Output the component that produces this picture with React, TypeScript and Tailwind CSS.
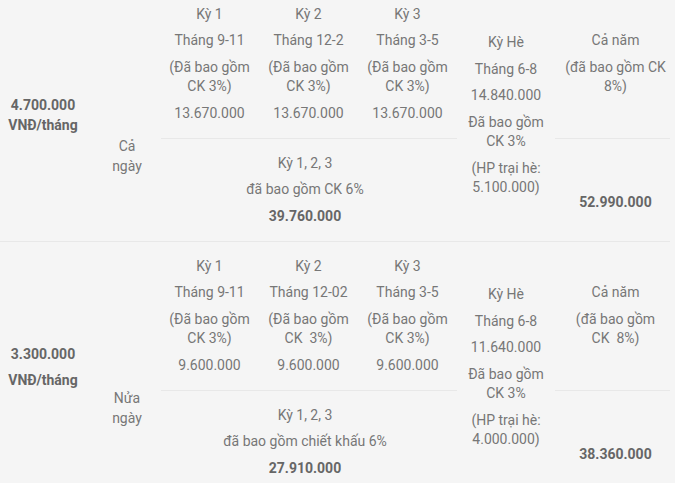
type Period = {
  title: string;
  months: string;
  note: string[];
  price: string;
};

type Plan = {
  fee: string[];
  splitFee: boolean;
  type: string[];
  periods: Period[];
  combo: { title: string; note: string; price: string };
  summer: { months: string; price: string; note: string[]; camp: string[] };
  year: { note: string[]; price: string };
};

const plans: Plan[] = [
  {
    fee: ["4.700.000", "VNĐ/tháng"],
    splitFee: false,
    type: ["Cả", "ngày"],
    periods: [
      { title: "Kỳ 1", months: "Tháng 9-11", note: ["(Đã bao gồm", "CK 3%)"], price: "13.670.000" },
      { title: "Kỳ 2", months: "Tháng 12-2", note: ["(Đã bao gồm", "CK 3%)"], price: "13.670.000" },
      { title: "Kỳ 3", months: "Tháng 3-5", note: ["(Đã bao gồm", "CK 3%)"], price: "13.670.000" },
    ],
    combo: { title: "Kỳ 1, 2, 3", note: "đã bao gồm CK 6%", price: "39.760.000" },
    summer: {
      months: "Tháng 6-8",
      price: "14.840.000",
      note: ["Đã bao gồm", "CK 3%"],
      camp: ["(HP trại hè:", "5.100.000)"],
    },
    year: { note: ["(đã bao gồm CK", "8%)"], price: "52.990.000" },
  },
  {
    fee: ["3.300.000", "VNĐ/tháng"],
    splitFee: true,
    type: ["Nửa", "ngày"],
    periods: [
      { title: "Kỳ 1", months: "Tháng 9-11", note: ["(Đã bao gồm", "CK 3%)"], price: "9.600.000" },
      { title: "Kỳ 2", months: "Tháng 12-02", note: ["(Đã bao gồm", "CK\u00a0 3%)"], price: "9.600.000" },
      { title: "Kỳ 3", months: "Tháng 3-5", note: ["(Đã bao gồm", "CK 3%)"], price: "9.600.000" },
    ],
    combo: { title: "Kỳ 1, 2, 3", note: "đã bao gồm chiết khấu 6%", price: "27.910.000" },
    summer: {
      months: "Tháng 6-8",
      price: "11.640.000",
      note: ["Đã bao gồm", "CK 3%"],
      camp: ["(HP trại hè:", "4.000.000)"],
    },
    year: { note: ["(đã bao gồm", "CK\u00a0 8%)"], price: "38.360.000" },
  },
];

const Lines = ({ lines, bold }: { lines: string[]; bold?: boolean }) => (
  <p className={`mb-[7px] last:mb-0 whitespace-nowrap ${bold ? "font-bold text-[#666]" : ""}`}>
    {lines.map((l, i) => (
      <span key={i} className="block">
        {l}
      </span>
    ))}
  </p>
);

const PlanBlock = ({ plan, first }: { plan: Plan; first: boolean }) => (
  <div
    className={`grid grid-cols-[86px_74px_99px_99px_99px_98px_115px] grid-rows-[148px_103px] ${
      first ? "-mt-[10px]" : "border-t border-[#e8e8e8]"
    }`}
  >
    {/* monthly fee */}
    <div className="row-span-2 flex flex-col items-center justify-center text-center font-bold text-[#666]">
      {plan.splitFee ? (
        plan.fee.map((f) => (
          <p key={f} className="mb-[7px] last:mb-0">
            {f}
          </p>
        ))
      ) : (
        <p>
          {plan.fee[0]}
          <br />
          {plan.fee[1]}
        </p>
      )}
    </div>

    {/* day type */}
    <div className="row-span-2 pt-[147px] pl-2 text-center">
      {plan.type[0]}
      <br />
      {plan.type[1]}
    </div>

    {plan.periods.map((p) => (
      <div key={p.title} className="flex flex-col items-center justify-center text-center">
        <Lines lines={[p.title]} />
        <Lines lines={[p.months]} />
        <Lines lines={p.note} />
        <Lines lines={[p.price]} />
      </div>
    ))}

    {/* summer */}
    <div className="row-span-2 flex flex-col items-center justify-center text-center">
      <Lines lines={["Kỳ Hè"]} />
      <Lines lines={[plan.summer.months]} />
      <Lines lines={[plan.summer.price]} />
      <Lines lines={plan.summer.note} />
      <Lines lines={plan.summer.camp} />
    </div>

    {/* full year header */}
    <div className="flex flex-col items-center justify-center pl-[6px] text-center">
      <Lines lines={["Cả năm"]} />
      <Lines lines={plan.year.note} />
    </div>

    {/* combo of three periods */}
    <div className="col-start-3 col-span-3 flex flex-col items-center justify-center border-t border-[#e8e8e8] ml-px pr-2 text-center">
      <Lines lines={[plan.combo.title]} />
      <Lines lines={[plan.combo.note]} />
      <Lines lines={[plan.combo.price]} bold />
    </div>

    {/* full year price */}
    <div className="col-start-7 flex flex-col items-center border-t border-[#e8e8e8] pt-[54px] pl-[6px] text-center">
      <Lines lines={[plan.year.price]} bold />
    </div>
  </div>
);

export default function App() {
  return (
    <div className="h-[483px] w-[675px] overflow-hidden bg-[#f5f5f5] font-['Roboto',sans-serif] text-[14px] leading-[19.5px] text-[#777]">
      <div className="w-[670px]">
        {plans.map((plan, i) => (
          <PlanBlock key={plan.fee[0]} plan={plan} first={i === 0} />
        ))}
      </div>
    </div>
  );
}
